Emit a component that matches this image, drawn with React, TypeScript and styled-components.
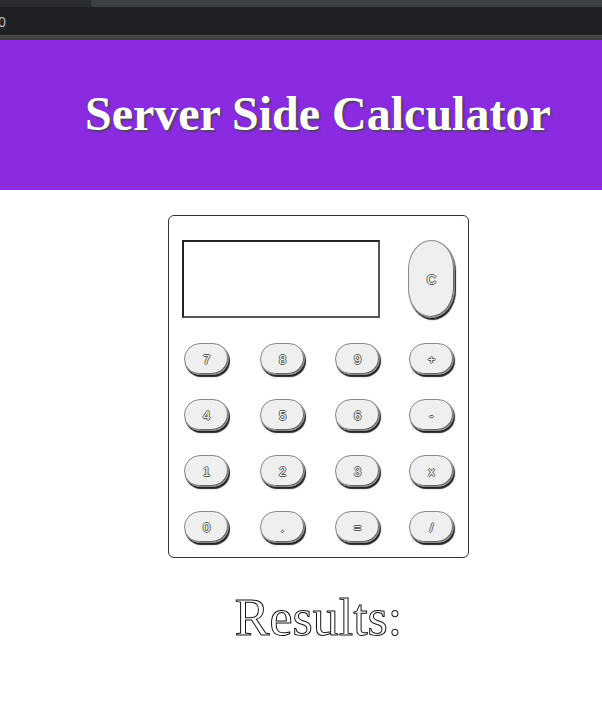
import React from "react"
import styled, { createGlobalStyle } from "styled-components"

const GlobalStyle = createGlobalStyle`
  html, body {
    margin: 0;
    padding: 0;
    background: #ffffff;
  }
  body {
    font-family: "Liberation Serif", "Times New Roman", serif;
  }
`

const Chrome = styled.div`
  height: 40px;
  display: flex;
  flex-direction: column;
  background: #202124;
`

const ChromeTabs = styled.div`
  height: 7px;
  background: #2b2c2f;
  display: flex;
  & > span {
    margin-left: 91px;
    flex: 1;
    background: #3b4045;
    border-bottom-left-radius: 3px;
  }
`

const ChromeAddress = styled.div`
  flex: 1;
  display: flex;
  align-items: center;
  color: #bdc1c6;
  font-family: "Open Sans", "DejaVu Sans", sans-serif;
  font-size: 14px;
  margin-left: -2px;
`

const ChromeEdge = styled.div`
  height: 5px;
  background: linear-gradient(#4d4d50, #3a3a3d);
`

const Header = styled.header`
  background: #8a2be2;
  height: 150px;
  box-sizing: border-box;
  display: flex;
  align-items: center;
  padding-left: 85px;
  padding-bottom: 4px;
`

const Title = styled.h1`
  margin: 0;
  color: #ffffff;
  font-family: "Liberation Serif", serif;
  font-weight: bold;
  font-size: 48px;
  text-shadow: 2px 2px 2px #4b4b4b;
  white-space: nowrap;
`

const Main = styled.main`
  display: flex;
  flex-direction: column;
  align-items: center;
  padding-top: 25px;
  padding-left: 35px;
`

const Calculator = styled.div`
  width: 301px;
  height: 343px;
  box-sizing: border-box;
  border: 1px solid #333;
  border-radius: 6px;
  padding: 24px 13px 0 13px;
`

const TopRow = styled.div`
  display: flex;
  justify-content: space-between;
`

const Display = styled.div`
  width: 198px;
  height: 78px;
  box-sizing: border-box;
  border: 2px solid;
  border-color: #222 #555 #555 #222;
`

const KeyButton = styled.button<{ tall?: boolean }>`
  width: ${({ tall }) => (tall ? "47px" : "45px")};
  height: ${({ tall }) => (tall ? "78px" : "32px")};
  border-radius: ${({ tall }) => (tall ? "24px / 30px" : "16px")};
  background: #efefef;
  border: 1px solid #8a8a8a;
  box-shadow: 1px 2px 1px #222, inset -1px -1px 0 #666;
  font-family: "Liberation Sans", Arial, sans-serif;
  font-size: 13px;
  color: #ffffff;
  text-shadow: -1px 0 0 #555, 1px 0 0 #555, 0 -1px 0 #555, 0 1px 0 #555;
  padding: 0;
  cursor: pointer;
`

const Keys = styled.div`
  display: grid;
  grid-template-columns: 76px 75px 74px 45px;
  row-gap: 24px;
  margin-top: 25px;
  padding-left: 2px;
`

const Results = styled.h2`
  margin: 30px 0 0 0;
  font-family: "Liberation Serif", serif;
  font-weight: normal;
  font-size: 52px;
  color: #ffffff;
  -webkit-text-stroke: 1px #111;
`

const keys = ["7", "8", "9", "+", "4", "5", "6", "-", "1", "2", "3", "x", "0", ".", "=", "/"]

export default function App() {
  return (
    <>
      <GlobalStyle />
      <Chrome>
        <ChromeTabs>
          <span />
        </ChromeTabs>
        <ChromeAddress>0</ChromeAddress>
        <ChromeEdge />
      </Chrome>
      <Header>
        <Title>Server Side Calculator</Title>
      </Header>
      <Main>
        <Calculator>
          <TopRow>
            <Display />
            <KeyButton tall>C</KeyButton>
          </TopRow>
          <Keys>
            {keys.map((k) => (
              <KeyButton key={k}>{k}</KeyButton>
            ))}
          </Keys>
        </Calculator>
        <Results>Results:</Results>
      </Main>
    </>
  )
}
